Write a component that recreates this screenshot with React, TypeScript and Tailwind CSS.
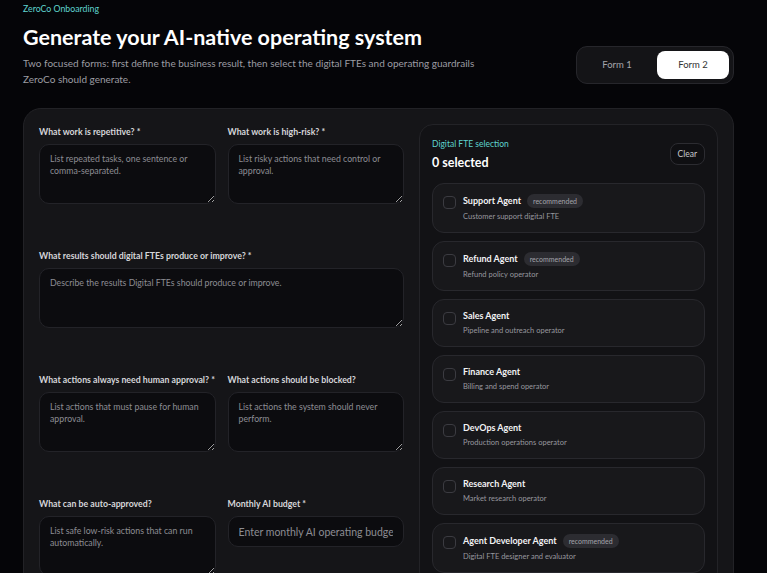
import { useState } from 'react';

const agents = [
  { name: 'Support Agent', desc: 'Customer support digital FTE', recommended: true },
  { name: 'Refund Agent', desc: 'Refund policy operator', recommended: true },
  { name: 'Sales Agent', desc: 'Pipeline and outreach operator', recommended: false },
  { name: 'Finance Agent', desc: 'Billing and spend operator', recommended: false },
  { name: 'DevOps Agent', desc: 'Production operations operator', recommended: false },
  { name: 'Research Agent', desc: 'Market research operator', recommended: false },
  { name: 'Agent Developer Agent', desc: 'Digital FTE designer and evaluator', recommended: true },
];

const Field = ({ label, placeholder, wide }: { label: string; placeholder: string; wide?: boolean }) => (
  <label className={`block ${wide ? 'col-span-2' : ''}`}>
    <span className="block whitespace-nowrap text-[8.75px] leading-[16px] font-bold text-[#d6d6da]">{label}</span>
    <textarea
      placeholder={placeholder}
      className="mt-1 block h-[60px] w-full rounded-[10px] border border-[#232328] bg-[#0c0c0f] px-[10px] py-2 text-[8.75px] leading-[12px] text-white placeholder:text-[#8c8c93] outline-none"
    />
  </label>
);

const App = () => {
  const [form, setForm] = useState(2);
  const [selected, setSelected] = useState<string[]>([]);

  const toggle = (name: string) => {
    if (selected.includes(name)) {
      setSelected(selected.filter(n => n !== name));
    } else {
      setSelected([...selected, name]);
    }
  };

  return (
    <div className="min-h-screen bg-[#050508] font-['Lato',sans-serif] text-white">
      <div className="w-[711px] ml-[23px] pt-[3px]">
        <div className="flex items-end justify-between">
          <div>
            <div className="text-[8.75px] leading-[12px] text-[#5fd3cf]">ZeroCo Onboarding</div>
            <h1 className="mt-[8px] text-[21.5px] leading-[28px] font-bold">
              Generate your AI-native operating system
            </h1>
            <p className="mt-[5px] max-w-[460px] text-[10px] leading-[15.5px] text-[#9c9ca3]">
              Two focused forms: first define the business result, then select the digital FTEs and operating guardrails
              ZeroCo should generate.
            </p>
          </div>
          <div className="mb-[3px] grid w-[158px] grid-cols-2 gap-1 rounded-[11px] border border-[#26262b] bg-[#141417] p-1">
            {[1, 2].map(n => (
              <button
                key={n}
                onClick={() => setForm(n)}
                className={`h-[28px] rounded-[8px] text-[9.5px] ${form === n ? 'bg-white text-[#333]' : 'text-[#a4a4ab]'}`}
              >
                Form {n}
              </button>
            ))}
          </div>
        </div>

        <div className="mt-[21px] flex gap-[15px] rounded-[18px] border border-[#222226] bg-[#151518] p-[15px]">
          <div className="w-[365px] flex-shrink-0">
            <div className="grid grid-cols-2 gap-x-3 gap-y-[44px]">
              <Field label="What work is repetitive? *" placeholder="List repeated tasks, one sentence or comma-separated." />
              <Field label="What work is high-risk? *" placeholder="List risky actions that need control or approval." />
              <Field wide label="What results should digital FTEs produce or improve? *" placeholder="Describe the results Digital FTEs should produce or improve." />
              <Field label="What actions always need human approval? *" placeholder="List actions that must pause for human approval." />
              <Field label="What actions should be blocked?" placeholder="List actions the system should never perform." />
              <Field label="What can be auto-approved?" placeholder="List safe low-risk actions that can run automatically." />
              <label className="block">
                <span className="block text-[8.75px] leading-[16px] font-bold text-[#d6d6da]">Monthly AI budget *</span>
                <input
                  placeholder="Enter monthly AI operating budget"
                  className="mt-1 block h-[31px] w-full rounded-[10px] border border-[#232328] bg-[#0c0c0f] px-[10px] text-[10.5px] text-white placeholder:text-[#8c8c93] outline-none"
                />
              </label>
            </div>
          </div>

          <div className="flex-1 rounded-[14px] border border-[#232327] bg-[#121215] p-3">
            <div className="flex items-center justify-between">
              <div>
                <div className="mt-[1px] text-[8.5px] leading-[12px] text-[#5fd3cf]">Digital FTE selection</div>
                <div className="mt-[5px] text-[12.5px] leading-[16px] font-bold">{selected.length} selected</div>
              </div>
              <button
                onClick={() => setSelected([])}
                className="h-[22px] rounded-[8px] border border-[#2c2c31] bg-[#0f0f12] px-[7px] text-[8.5px] text-[#c9c9ce]"
              >
                Clear
              </button>
            </div>

            <div className="mt-[12px] flex flex-col gap-2">
              {agents.map(a => (
                <button
                  key={a.name}
                  onClick={() => toggle(a.name)}
                  className="flex items-start gap-[7px] rounded-[12px] border border-[#28282d] bg-[#18181b] px-[10px] py-[10px] text-left"
                >
                  <span
                    className={`mt-[2px] h-[13px] w-[13px] flex-shrink-0 rounded-[4px] border ${selected.includes(a.name) ? 'border-white bg-white' : 'border-[#3b3b41]'}`}
                  />
                  <span className="block">
                    <span className="flex items-center gap-[6px]">
                      <span className="text-[9px] leading-[12px] font-bold text-[#f2f2f4]">{a.name}</span>
                      {a.recommended && (
                        <span className="rounded-full bg-[#2c2c31] px-[6px] text-[7px] leading-[14px] text-[#a3a3aa]">
                          recommended
                        </span>
                      )}
                    </span>
                    <span className="mt-[3px] block text-[7.5px] leading-[11px] text-[#97979e]">{a.desc}</span>
                  </span>
                </button>
              ))}
            </div>
          </div>
        </div>
      </div>
    </div>
  );
};

export default App;
